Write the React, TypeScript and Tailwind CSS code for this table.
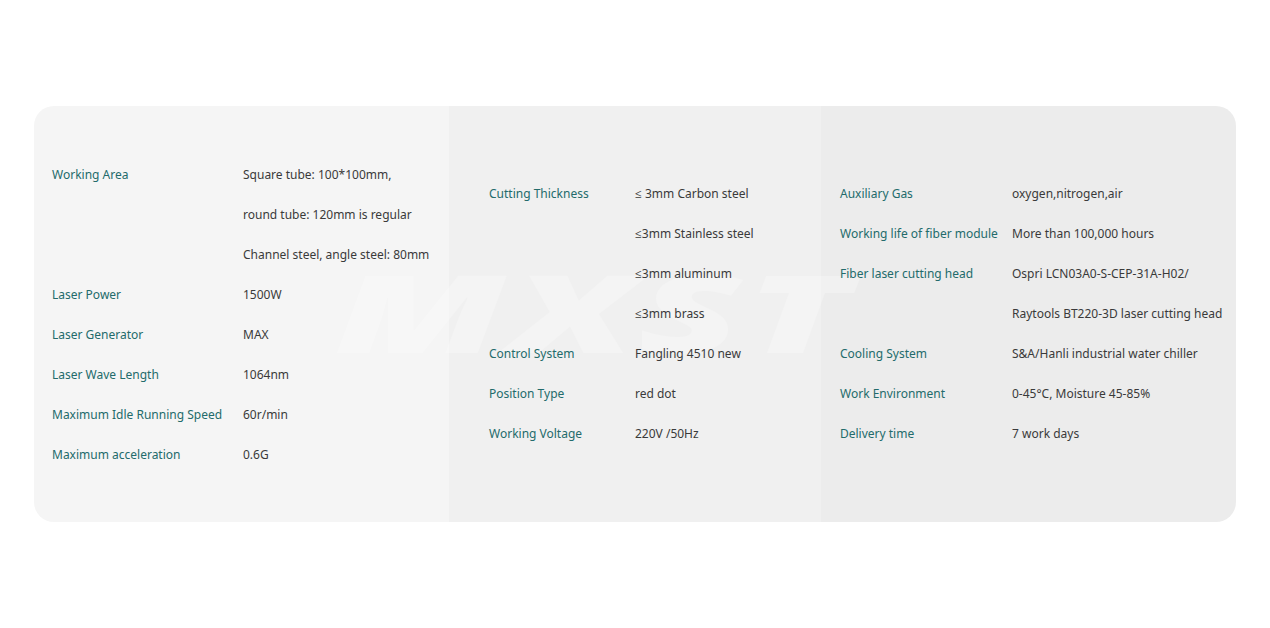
import React from 'react';

type Row = { label?: string; value: string };

const col1: Row[] = [
  { label: 'Working Area', value: 'Square tube: 100*100mm,' },
  { value: 'round tube: 120mm is regular' },
  { value: 'Channel steel, angle steel: 80mm' },
  { label: 'Laser Power', value: '1500W' },
  { label: 'Laser Generator', value: 'MAX' },
  { label: 'Laser Wave Length', value: '1064nm' },
  { label: 'Maximum Idle Running Speed', value: '60r/min' },
  { label: 'Maximum acceleration', value: '0.6G' },
];

const col2: Row[] = [
  { label: 'Cutting Thickness', value: '≤ 3mm Carbon steel' },
  { value: '≤3mm Stainless steel' },
  { value: '≤3mm aluminum' },
  { value: '≤3mm brass' },
  { label: 'Control System', value: 'Fangling 4510 new' },
  { label: 'Position Type', value: 'red dot' },
  { label: 'Working Voltage', value: '220V /50Hz' },
];

const col3: Row[] = [
  { label: 'Auxiliary Gas', value: 'oxygen,nitrogen,air' },
  { label: 'Working life of fiber module', value: 'More than 100,000 hours' },
  { label: 'Fiber laser cutting head', value: 'Ospri LCN03A0-S-CEP-31A-H02/' },
  { value: 'Raytools BT220-3D laser cutting head' },
  { label: 'Cooling System', value: 'S&A/Hanli industrial water chiller' },
  { label: 'Work Environment', value: '0-45°C, Moisture 45-85%' },
  { label: 'Delivery time', value: '7 work days' },
];

const SpecColumn: React.FC<{ rows: Row[]; labelW: string; className: string }> = ({
  rows,
  labelW,
  className,
}) => (
  <div className={`flex flex-col justify-center ${className}`}>
    {rows.map((r, i) => (
      <div key={i} className="relative z-10 flex items-center h-10">
        <div className={`${labelW} shrink-0 text-[#236b6b]`}>{r.label}</div>
        <div className="text-[#3a3a3a] whitespace-nowrap">{r.value}</div>
      </div>
    ))}
  </div>
);

export default function App() {
  return (
    <div
      className="w-[1270px] h-[628px] bg-white pt-[106px] px-[34px] text-[12px]"
      style={{ fontFamily: '"Noto Sans", "Open Sans", sans-serif' }}
    >
      <div className="relative flex h-[416px] rounded-[20px] overflow-hidden">
        <SpecColumn rows={col1} labelW="w-[191px]" className="w-[415px] bg-[#f5f5f5] pl-[18px] pt-[2px]" />
        <SpecColumn rows={col2} labelW="w-[146px]" className="w-[372px] bg-[#f0f0f0] pl-[40px]" />
        <SpecColumn rows={col3} labelW="w-[172px]" className="w-[415px] bg-[#ececec] pl-[19px]" />
        <div
          aria-hidden
          className="pointer-events-none select-none absolute left-[300px] top-[152px] origin-left scale-x-[1.75] text-[108px] leading-none font-black italic tracking-[2px] text-white/25"
        >
          MXST
        </div>
      </div>
    </div>
  );
}
